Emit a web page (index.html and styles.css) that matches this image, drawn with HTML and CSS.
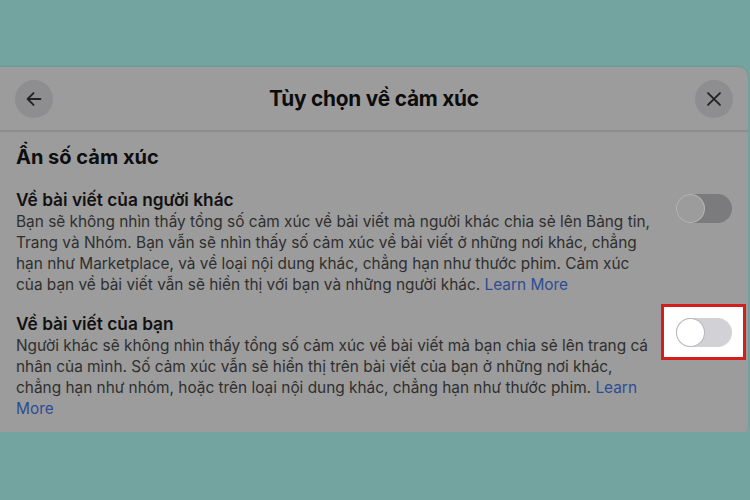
FILE: index.html
```html
<!DOCTYPE html>
<html lang="vi">
<head>
<meta charset="utf-8">
<title>Tùy chọn về cảm xúc</title>
<link rel="stylesheet" href="styles.css">
</head>
<body>
<div class="sheet">
  <header class="sheet-head">
    <button class="round-btn" aria-label="Quay lại">
      <svg viewBox="0 0 24 24" width="22" height="22"><path d="M19 12H5.5M11.5 5.5L5 12l6.5 6.5" fill="none" stroke="#222" stroke-width="2" stroke-linecap="round" stroke-linejoin="round"/></svg>
    </button>
    <h1 class="sheet-title">Tùy chọn về cảm xúc</h1>
    <button class="round-btn" aria-label="Đóng">
      <svg viewBox="0 0 24 24" width="22" height="22"><path d="M5.5 5.5l13 13M18.5 5.5l-13 13" fill="none" stroke="#222" stroke-width="2" stroke-linecap="round"/></svg>
    </button>
  </header>
  <main class="sheet-body">
    <h2 class="section-title">Ẩn số cảm xúc</h2>
    <div class="option">
      <div class="option-text">
        <h3 class="option-title">Về bài viết của người khác</h3>
        <p class="option-desc">Bạn sẽ không nhìn thấy tổng số cảm xúc về bài viết mà người khác chia sẻ lên Bảng tin,<br>Trang và Nhóm. Bạn vẫn sẽ nhìn thấy số cảm xúc về bài viết ở những nơi khác, chẳng<br>hạn như Marketplace, và về loại nội dung khác, chẳng hạn như thước phim. Cảm xúc<br>của bạn về bài viết vẫn sẽ hiển thị với bạn và những người khác. <a href="#">Learn More</a></p>
      </div>
      <div class="toggle-slot">
        <span class="toggle toggle-dim"><span class="knob"></span></span>
      </div>
    </div>
    <div class="option">
      <div class="option-text">
        <h3 class="option-title">Về bài viết của bạn</h3>
        <p class="option-desc">Người khác sẽ không nhìn thấy tổng số cảm xúc về bài viết mà bạn chia sẻ lên trang cá<br>nhân của mình. Số cảm xúc vẫn sẽ hiển thị trên bài viết của bạn ở những nơi khác,<br>chẳng hạn như nhóm, hoặc trên loại nội dung khác, chẳng hạn như thước phim. <a href="#">Learn<br>More</a></p>
      </div>
      <div class="toggle-slot highlight">
        <span class="toggle"><span class="knob"></span></span>
      </div>
    </div>
  </main>
</div>
</body>
</html>
```
FILE: styles.css
```css
html, body {
  margin: 0;
  padding: 0;
}

body {
  width: 750px;
  height: 500px;
  overflow: hidden;
  background: #74a49f;
  font-family: Inter, "Noto Sans", sans-serif;
  color: #111;
}

.sheet {
  margin-top: 67px;
  width: 748px;
  height: 365px;
  background: #9c9c9c;
  border-radius: 0 10px 4px 0;
  box-shadow: 0 -1px 2px rgba(0, 0, 0, 0.08);
}

.sheet-head {
  height: 63px;
  display: flex;
  align-items: center;
  justify-content: space-between;
  padding: 0 15px;
  border-bottom: 2px solid #8d8d8d;
}

.round-btn {
  width: 38px;
  height: 38px;
  border-radius: 50%;
  border: none;
  padding: 0;
  background: #8e8e91;
  display: flex;
  align-items: center;
  justify-content: center;
}

.sheet-title {
  margin: 0;
  font-size: 20.8px;
  font-weight: 700;
  letter-spacing: -0.2px;
  color: #0c0c0c;
}

.sheet-body {
  padding: 12px 16px 0 16px;
}

.section-title {
  margin: 0 0 19px 0;
  font-size: 20px;
  font-weight: 700;
  line-height: 26px;
  color: #0e0e0e;
}

.option {
  display: flex;
  align-items: flex-start;
  margin-bottom: 18px;
}

.option-text {
  flex: 1;
}

.option-title {
  margin: 0;
  font-size: 17.3px;
  font-weight: 600;
  line-height: 22px;
  color: #111;
}

.option-desc {
  margin: 0;
  font-size: 15.4px;
  line-height: 21px;
  color: #2f2f2f;
}

.option-desc a {
  color: #2c4c94;
  text-decoration: none;
}

.toggle-slot {
  width: 85px;
  height: 56px;
  margin-right: -14px;
  margin-top: -9px;
  display: flex;
  align-items: center;
  justify-content: center;
  box-sizing: border-box;
}

.toggle-slot.highlight {
  background: #fff;
  border: 3px solid #d41e1e;
}

.toggle {
  width: 56px;
  height: 29px;
  border-radius: 15px;
  background: #d2d2d6;
  position: relative;
  display: block;
}

.knob {
  position: absolute;
  left: 1px;
  top: 1px;
  width: 27px;
  height: 27px;
  border-radius: 50%;
  background: #fff;
  box-shadow: 0 0 0 1px #b9b9bd;
}

.toggle-dim {
  background: #7b7b7e;
}

.toggle-dim .knob {
  background: #9c9c9c;
  box-shadow: 0 0 0 1px #b5b5b5;
}
```
